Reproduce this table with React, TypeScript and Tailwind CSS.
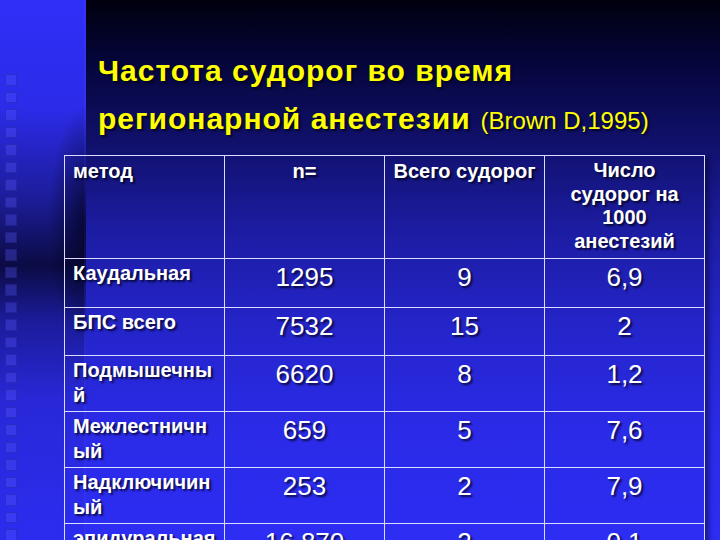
import React from "react";

const rows: { label: React.ReactNode; n: string; total: string; rate: string }[] = [
  { label: "Каудальная", n: "1295", total: "9", rate: "6,9" },
  { label: "БПС всего", n: "7532", total: "15", rate: "2" },
  { label: <>Подмышечны<br />й</>, n: "6620", total: "8", rate: "1,2" },
  { label: <>Межлестничн<br />ый</>, n: "659", total: "5", rate: "7,6" },
  { label: <>Надключичин<br />ый</>, n: "253", total: "2", rate: "7,9" },
  { label: "эпидуральная", n: "16 870", total: "2", rate: "0,1" },
];

const shadow = "[text-shadow:2px_2px_2px_rgba(0,0,20,0.75)]";

export default function App() {
  const squares = Array.from({ length: 27 });
  return (
    <div
      className="w-[720px] h-[540px] overflow-hidden flex font-['Liberation_Sans',Arial,sans-serif] [background:radial-gradient(ellipse_38px_120px_at_86px_225px,rgba(0,0,25,0.7),rgba(0,0,25,0))_0_0/86px_100%_no-repeat,linear-gradient(to_right,rgba(60,60,255,0)_0px,rgba(60,60,255,0.7)_1px,rgba(60,60,255,0)_2px)_84px_0/2px_100%_no-repeat,linear-gradient(to_bottom,#2f2ff8_0px,#2b2be8_110px,#1c1c98_200px,#0b0b44_265px,#1b1b9a_320px,#2828d8_400px,#2c2cf0_540px)_0_0/86px_100%_no-repeat,linear-gradient(to_bottom,#00000e_0px,#05053a_60px,#10106a_140px,#1c1ca2_230px,#2424c8_320px,#2a2ae6_420px,#2d2df4_540px)]"
    >
      <div className="w-[64px] shrink-0 flex flex-col items-start pl-[5px] pt-[74px] gap-[6px]">
        {squares.map((_, i) => (
          <div
            key={i}
            className="w-[12px] h-[11.5px] shrink-0 bg-[rgba(90,90,255,0.32)] border border-[rgba(0,0,60,0.22)]"
          />
        ))}
      </div>
      <div className="flex flex-col">
        <h1
          className={`pl-[34px] pt-[47px] text-[#ffff00] font-bold text-[30px] tracking-[1px] leading-[48px] ${shadow}`}
        >
          Частота судорог во время
          <br />
          регионарной анестезии
          <span className="ml-[10px] font-normal text-[24px] tracking-normal">(Brown D,1995)</span>
        </h1>
        <div
          className={`mt-[10px] w-[641px] grid grid-cols-[160px_160px_160px_160px] grid-rows-[103px_49px_48px_56px_56px_56px_56px] border-t border-l border-[#dcdcff] text-white ${shadow} shadow-[4px_3px_5px_rgba(0,0,30,0.45)]`}
        >
          <div className="border-r border-b border-[#dcdcff] pl-[8px] pt-[3px] font-bold text-[20px] leading-[24px]">
            метод
          </div>
          <div className="border-r border-b border-[#dcdcff] pt-[3px] text-center font-bold text-[20px] leading-[24px]">
            n=
          </div>
          <div className="border-r border-b border-[#dcdcff] pt-[3px] text-center font-bold text-[20px] leading-[24px] whitespace-nowrap">
            Всего судорог
          </div>
          <div className="border-r border-b border-[#dcdcff] pt-[3px] text-center font-bold text-[20px] leading-[23.5px]">
            Число
            <br />
            судорог на
            <br />
            1000
            <br />
            анестезий
          </div>
          {rows.map((r, i) => (
            <React.Fragment key={i}>
              <div className="border-r border-b border-[#dcdcff] pl-[8px] pt-[2px] font-bold text-[20px] leading-[25px] whitespace-nowrap">
                {r.label}
              </div>
              <div className="border-r border-b border-[#dcdcff] pt-[3px] text-center text-[26px] leading-[30px]">
                {r.n}
              </div>
              <div className="border-r border-b border-[#dcdcff] pt-[3px] text-center text-[26px] leading-[30px]">
                {r.total}
              </div>
              <div className="border-r border-b border-[#dcdcff] pt-[3px] text-center text-[26px] leading-[30px]">
                {r.rate}
              </div>
            </React.Fragment>
          ))}
        </div>
      </div>
    </div>
  );
}
